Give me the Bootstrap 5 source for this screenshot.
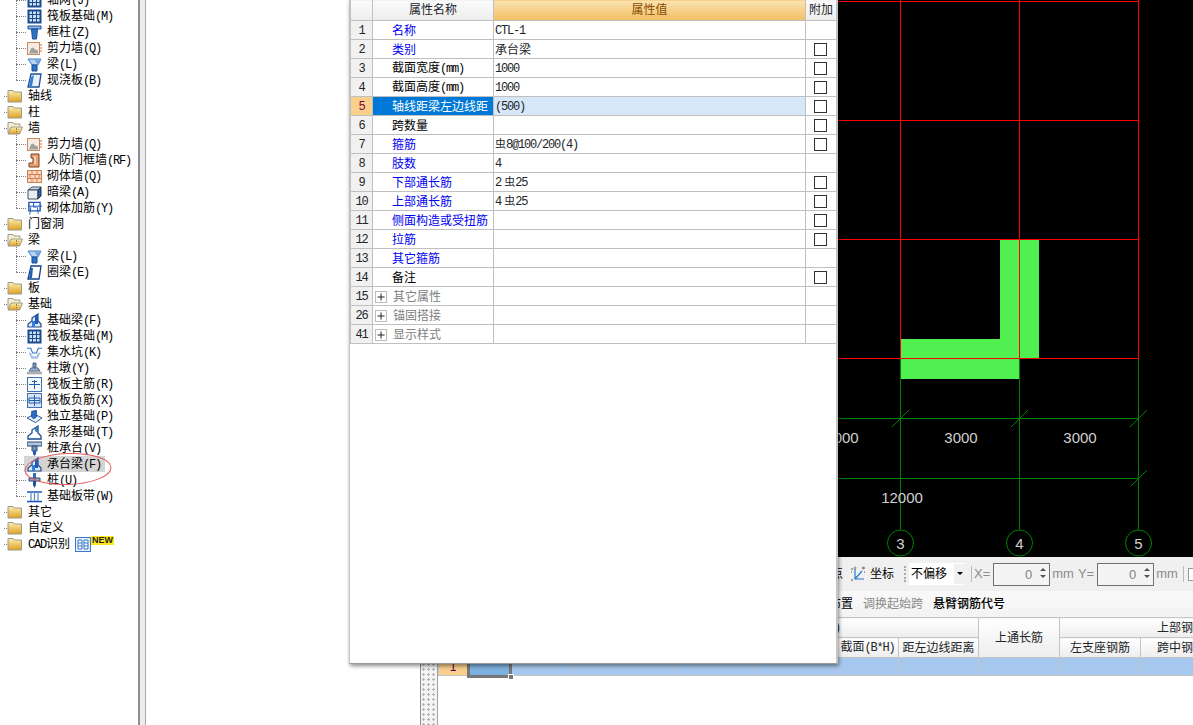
<!DOCTYPE html>
<html lang="zh">

<head>
    <meta charset="UTF-8">
    <meta name="viewport" content="width=device-width, initial-scale=1.0">
    <title>构件属性定义</title>
    <link href="https://cdn.jsdelivr.net/npm/bootstrap@5.3.2/dist/css/bootstrap.min.css" rel="stylesheet">
    <style>
        html, body { height: 100%; overflow: hidden; background: #fff; }
        body { font-family: "Liberation Sans", "Noto Sans CJK SC", sans-serif; font-size: 12px; line-height: 16px; color: #000; }
        .lat { font-family: "Liberation Mono", monospace; letter-spacing: -1.2px; }
        .app-shell { height: 725px; width: 1193px; position: relative; overflow: hidden; }

        /* left tree */
        .tree-pane { width: 138px; flex: none; margin-top: -8px; position: relative; }
        .tree-row { height: 16px; padding-left: 7px; position: relative; white-space: nowrap; }
        .tree-row::before { content: ""; position: absolute; left: 4px; width: 3px; top: 8px; border-top: 1px dotted #808080; }
        .tree-row.leaf { padding-left: 27px; }
        .tree-row.leaf::before { left: 16px; width: 10px; }
        .tree-row.leaf::after { content: ""; position: absolute; left: 16px; top: -8px; height: 16px; border-left: 1px dotted #808080; }
        .tree-row.picked::after { z-index: 1; }
        .tree-pick { position: absolute; left: 24px; top: 0; width: 81px; height: 16px; background: #d4d4d4; }
        .tree-row svg, .tree-row .tree-text { position: relative; }
        .ico-leaf { width: 15px; height: 15px; margin-right: 5px; flex: none; }
        .ico-folder { width: 16px; height: 14px; margin-right: 5px; flex: none; }
        .ico-cad { width: 16px; height: 15px; margin-left: 5px; flex: none; }
        .tag-new { align-self: flex-start; margin-left: 0; background: #ffe81a; font: bold 9px/9px "Liberation Sans", sans-serif; padding: 0 1px; color: #222; }
        .pick-ring { position: absolute; left: 20px; top: 456px; width: 96px; height: 42px; overflow: visible; }
        .pane-split { width: 8px; flex: none; background: #ececec; border-left: 2px solid #8e8e96; border-right: 1px solid #a8a8b0; }
        .blank-pane { width: 274px; flex: none; }

        /* main area */
        .main-pane { width: 773px; flex: none; }
        .cad-view { display: block; width: 773px; height: 557px; background: #000; flex: none; }
        .cad-label { font-family: "Liberation Sans", sans-serif; font-size: 15px; fill: #d0d0d0; text-anchor: middle; }
        .tool-one { height: 34px; background: #f0f0f0; flex: none; white-space: nowrap; }
        .tool-two { height: 26px; background: linear-gradient(#f9f9f9, #f3f3f3); flex: none; white-space: nowrap; }
        .tool-lead { width: 423px; text-align: right; flex: none; }
        .tool-two .tool-lead { width: 433px; }
        .axis-ico { width: 16px; height: 16px; margin-left: 7px; flex: none; }
        .grip-dots { width: 2px; height: 16px; margin-left: 10px; border-left: 2px dotted #aaa; flex: none; }
        .offset-pick { width: 57px; height: 22px; margin-left: 3px; background: #fff; padding-left: 2px; flex: none; position: relative; }
        .offset-pick b { position: absolute; right: 0; top: 1px; width: 12px; height: 20px; background: #f0f0f0; }
        .offset-pick b::after { content: ""; position: absolute; left: 3px; top: 8px; border: 3px solid transparent; border-top: 3px solid #000; }
        .tool-sep { width: 1px; height: 16px; background: #bbb; margin: 0 2px 0 5px; flex: none; }
        .tool-dim { color: #8c8c8c; font-size: 13px; flex: none; }
        .spin-box { width: 57px; height: 23px; border: 1px solid #707070; background: #f4f4f4; margin: 0 2px 0 3px; flex: none; }
        .spin-box input { width: 43px; height: 21px; border: 0; padding: 0 5px 0 0; background: transparent; text-align: right; color: #808080; font-size: 13px; border-radius: 0; }
        .spin-arrows { width: 12px; }
        .spin-arrows i { display: block; width: 0; margin: 4px auto; border: 3px solid transparent; }
        .spin-arrows i:first-child { border-bottom-color: #555; border-top: 0; }
        .spin-arrows i:last-child { border-top-color: #555; border-bottom: 0; }
        .tool-check { width: 13px; height: 13px; border: 1px solid #999; background: #fff; margin-left: 2px; flex: none; }
        .tool-faded { color: #8a8a8a; margin-left: 10px; }
        .tool-strong { margin-left: 10px; font-weight: 500; }

        /* bottom grid */
        .grid-strip { width: 18px; flex: none; height: 108px; border-left: 1px solid #8e8e96; border-right: 1px solid #a0a0a8; background: #f3f3f3 radial-gradient(#b4b4b4 1px, transparent 1.2px) 0 0 / 5px 5px; margin-right: 0; }
        .table.span-grid { table-layout: fixed; width: 864px; margin: 0; border-collapse: collapse; flex: none; align-self: flex-start; }
        .table.span-grid th, .table.span-grid td { padding: 0; border: 1px solid #c4c4c4; font-weight: 400; text-align: center; vertical-align: middle; line-height: 16px; white-space: nowrap; }
        .table.span-grid th { height: 20px; background: linear-gradient(#fff, #ededed); }
        .table.span-grid td { height: 18px; background: #a6c8ee; }
        .table.span-grid td.grid-num { background: #f8cf8c; color: #60004a; }
        .table.span-grid td.grid-sel { background: #7eb0e0; position: relative; }
        .table.span-grid th.head-tail { text-align: right; padding-right: 138px; }
        .sel-box { position: absolute; left: -1px; right: -2px; top: -1px; bottom: -3px; border: 3px solid #777; }
        .sel-handle { position: absolute; right: -5px; bottom: -5px; width: 6px; height: 6px; background: #777; border: 1px solid #fff; }

        /* property dialog */
        .prop-window { position: absolute; left: 349px; top: 0; width: 489px; height: 664px; background: #fff; border-right: 2px solid #c4c4c4; border-bottom: 1px solid #999; border-left: 1px solid #c4c4c4; box-shadow: 1px 2px 4px rgba(0, 0, 0, .45); }
        .table.prop-table { table-layout: fixed; width: 486px; margin: -1px 0 0 0; border-collapse: collapse; }
        .table.prop-table th, .table.prop-table td { padding: 1px 0 0; height: 19px; border: 1px solid #c0c0c0; line-height: 16px; font-weight: 400; white-space: nowrap; overflow: hidden; vertical-align: middle; }
        .table.prop-table thead th { height: 21px; padding: 0; text-align: center; background: linear-gradient(#fbfbfb, #ededed); }
        .table.prop-table thead th.head-value { background: linear-gradient(#fbe3b2, #f2bf62); color: #8a4b00; }
        .table.prop-table td.row-num { text-align: center; background: #f1f1f1; }
        .table.prop-table td.row-name { padding: 2px 0 0 19px; line-height: 15px; color: #000; }
        .table.prop-table td.row-value { padding-left: 1px; }
        .table.prop-table td.row-extra { padding-top: 0; }
        .table.prop-table td.row-name.is-link { color: #0000f0; }
        .table.prop-table td.row-name.is-group { color: #808080; padding-left: 1px; }
        .table.prop-table tr.is-active td.row-num { background: #fbd08c; color: #800040; }
        .table.prop-table tr.is-active td.row-name { background: #0078d7; color: #fff; }
        .table.prop-table tr.is-active td.row-value { background: #d6e8f8; }
        .prop-check { display: block; width: 13px; height: 13px; margin: 0 0 0 8px; appearance: none; border: 1px solid #333; background: #fff; }
        .plus-box { width: 12px; height: 12px; margin: 0 6px 0 1px; vertical-align: -2px; }
        .bar-sign { font-size: 11px; }
    </style>
</head>

<body>
    <svg width="0" height="0" class="position-absolute">
        <defs>
            <linearGradient id="gold" x1="0" y1="0" x2="0" y2="1"><stop offset="0" stop-color="#fdf0b0" /><stop offset="1" stop-color="#e0a020" /></linearGradient>
            <symbol id="i-folder" viewBox="0 0 16 14"><path d="M1 3V1.500h5L7 3h7.500v10H1z" fill="url(#gold)" stroke="#9a9a8a" /></symbol>
            <symbol id="i-folder-open" viewBox="0 0 16 14"><path d="M1 12V1.500h5L7 3h6v2" fill="#f6f0d0" stroke="#9a9a8a" /><path d="M1 13L4 6h11.500l-3 7z" fill="url(#gold)" stroke="#9a9a8a" /></symbol>
            <symbol id="i-raft" viewBox="0 0 15 15"><rect x=".5" y=".5" width="14" height="14" fill="#1a4a90" /><rect x="2.500" y="2.500" width="10" height="10" fill="#c8dcf2" /><path d="M5.500 2v11M9.500 2v11M2 5.500h11M2 9.500h11" stroke="#1a4a90" /></symbol>
            <symbol id="i-post" viewBox="0 0 15 15"><path d="M1 1h13v3H1z" fill="#8cb8e8" stroke="#1f4f96" /><path d="M4.500 4h6l-1 10h-4z" fill="#2c70c8" stroke="#1f4f96" /></symbol>
            <symbol id="i-shear" viewBox="0 0 15 15"><rect x=".5" y="1.500" width="12" height="12" fill="#f4ece4" stroke="#d08858" /><path d="M2 12.500l2-5 2-1 2 2 3 1v3z" fill="#a0a0a0" /><path d="M13 4h2M13 7h2M13 10h2" stroke="#d07030" /></symbol>
            <symbol id="i-beam" viewBox="0 0 15 15"><path d="M1 2h13l-3 6H5z" fill="#b8d4f0" stroke="#3878c8" /><path d="M5 8h5v6H5z" fill="#2c70c8" stroke="#1f4f96" /><path d="M7 2l7 0-3 6z" fill="#70a8e0" /></symbol>
            <symbol id="i-slab" viewBox="0 0 15 15"><path d="M4 1h10l-2 13H1z" fill="#e8f0fa" stroke="#1f4f96" stroke-width="1.300" /><path d="M2 13l2-9 3-2-2 11z" fill="#3080d8" /></symbol>
            <symbol id="i-frame-wall" viewBox="0 0 15 15"><path d="M5 1h7v13H2v-4h4V5H4V1z" fill="#e8a070" stroke="#7a4020" /><path d="M8 3v8" stroke="#fff" /></symbol>
            <symbol id="i-brick" viewBox="0 0 15 15"><rect x=".5" y="1.500" width="14" height="12" fill="#f8d8c0" stroke="#d08050" /><path d="M1 5.500h13M1 9.500h13M5 2v3.500M10 2v3.500M3 5.500v4M8 5.500v4M12 5.500v4M5 9.500v4M10 9.500v4" stroke="#d08050" /></symbol>
            <symbol id="i-hidden" viewBox="0 0 15 15"><path d="M1 5l4-3h9l-3 3z" fill="#c8d8e8" stroke="#405060" /><path d="M1 5h10v9H1z" fill="#e8eef4" stroke="#405060" /><path d="M11 5l3-3v9l-3 3z" fill="#3060a0" stroke="#203050" /></symbol>
            <symbol id="i-tie" viewBox="0 0 16 15"><path d="M2 1h12v9H2z" fill="none" stroke="#1f58b8" stroke-width="1.500" /><path d="M1 5h15M7 1v5M4 6l-1 8M11 6l1 7M7 6h3" stroke="#1f58b8" /></symbol>
            <symbol id="i-ring" viewBox="0 0 15 15"><path d="M4 1h10l-2 13H1z" fill="#fff" stroke="#10408a" stroke-width="1.300" /><path d="M2 13l2-10 2 0-1 10z" fill="#2060b8" /></symbol>
            <symbol id="i-found" viewBox="0 0 15 15"><path d="M1 14h13v-3l-3-3V1L5 5v3l-4 3z" fill="#dce8f6" stroke="#1a4a90" stroke-width="1.200" /><path d="M11 1v10H8V3z" fill="#1f58b8" /><path d="M5 8h3v6H5z" fill="#3080d8" /></symbol>
            <symbol id="i-sump" viewBox="0 0 16 15"><path d="M0 3h4l2 5h4l2-5h4" fill="none" stroke="#3878c8" stroke-width="1.200" /><path d="M2 8h2l2 4h4l2-4h2l-3 6H5z" fill="#a8c8ec" stroke="#8cb0d8" stroke-width=".5" /></symbol>
            <symbol id="i-pad" viewBox="0 0 15 15"><path d="M6 2h3v5H6z" fill="#7090b8" stroke="#506888" /><path d="M4 7h7l2 3H2z" fill="#9cb4d0" stroke="#506888" /><path d="M0 11h15v2H0z" fill="#bcbcbc" stroke="#888" stroke-width=".5" /></symbol>
            <symbol id="i-main-bar" viewBox="0 0 15 15"><rect x=".5" y=".5" width="14" height="14" fill="#f4f8fc" stroke="#4070b0" /><path d="M2 7.500h11M7.500 3v9M5 4.500h5" stroke="#2060b0" /></symbol>
            <symbol id="i-neg-bar" viewBox="0 0 15 15"><rect x=".5" y=".5" width="14" height="14" fill="#d8e4f2" stroke="#4070b0" /><path d="M2 5h11v5H2zM7.500 2v11M2 7.500h11" fill="none" stroke="#2060b0" /></symbol>
            <symbol id="i-isolated" viewBox="0 0 16 15"><path d="M0 9l8-4 8 4-7 5z" fill="#e8f0f8" stroke="#1f4f96" /><path d="M5 2l5-1v7l-3 2-2-2z" fill="#2c70c8" stroke="#1f4f96" /></symbol>
            <symbol id="i-strip" viewBox="0 0 15 15"><path d="M1 14h13v-3l-3-3V1L5 5v3l-4 3z" fill="#fff" stroke="#1a4a90" stroke-width="1.300" /><path d="M11 1v7L8 6V3z" fill="#3878c8" /></symbol>
            <symbol id="i-cap" viewBox="0 0 15 15"><path d="M0 1h15v4H0z" fill="#b0c4dc" stroke="#2c4c78" /><path d="M5 5h5v5H5z" fill="#7090b8" stroke="#2c4c78" /><path d="M6 10h3v3l-1.500 2L6 13z" fill="#1f58b8" /></symbol>
            <symbol id="i-pile" viewBox="0 0 15 15"><path d="M6 0h3v5H6z" fill="#3070c0" /><path d="M2 5h11v3H2z" fill="#90a8c8" stroke="#2c4c78" /><path d="M6 8h3v4l-1.500 3L6 12z" fill="#1f4f96" /></symbol>
            <symbol id="i-band" viewBox="0 0 15 15"><path d="M0 3h15M0 12.500h15" stroke="#1f58b8" stroke-width="1.500" /><path d="M4 3v9M7.500 3v9M11 3v9" stroke="#6090c8" stroke-width="1.300" /><path d="M0 13h15v1H0z" fill="#a8c8ec" /></symbol>
        </defs>
    </svg>

    <div class="app-shell d-flex">
        <div class="tree-pane">
            <div class="tree-row leaf d-flex align-items-center"><svg class="ico-leaf"><use href="#i-raft" /></svg><span class="tree-text">轴网<span class="lat">(J)</span></span></div>
            <div class="tree-row leaf d-flex align-items-center"><svg class="ico-leaf"><use href="#i-raft" /></svg><span class="tree-text">筏板基础<span class="lat">(M)</span></span></div>
            <div class="tree-row leaf d-flex align-items-center"><svg class="ico-leaf"><use href="#i-post" /></svg><span class="tree-text">框柱<span class="lat">(Z)</span></span></div>
            <div class="tree-row leaf d-flex align-items-center"><svg class="ico-leaf"><use href="#i-shear" /></svg><span class="tree-text">剪力墙<span class="lat">(Q)</span></span></div>
            <div class="tree-row leaf d-flex align-items-center"><svg class="ico-leaf"><use href="#i-beam" /></svg><span class="tree-text">梁<span class="lat">(L)</span></span></div>
            <div class="tree-row leaf d-flex align-items-center"><svg class="ico-leaf"><use href="#i-slab" /></svg><span class="tree-text">现浇板<span class="lat">(B)</span></span></div>
            <div class="tree-row d-flex align-items-center"><svg class="ico-folder"><use href="#i-folder" /></svg>轴线</div>
            <div class="tree-row d-flex align-items-center"><svg class="ico-folder"><use href="#i-folder" /></svg>柱</div>
            <div class="tree-row d-flex align-items-center"><svg class="ico-folder"><use href="#i-folder-open" /></svg>墙</div>
            <div class="tree-row leaf d-flex align-items-center"><svg class="ico-leaf"><use href="#i-shear" /></svg><span class="tree-text">剪力墙<span class="lat">(Q)</span></span></div>
            <div class="tree-row leaf d-flex align-items-center"><svg class="ico-leaf"><use href="#i-frame-wall" /></svg><span class="tree-text">人防门框墙<span class="lat">(RF)</span></span></div>
            <div class="tree-row leaf d-flex align-items-center"><svg class="ico-leaf"><use href="#i-brick" /></svg><span class="tree-text">砌体墙<span class="lat">(Q)</span></span></div>
            <div class="tree-row leaf d-flex align-items-center"><svg class="ico-leaf"><use href="#i-hidden" /></svg><span class="tree-text">暗梁<span class="lat">(A)</span></span></div>
            <div class="tree-row leaf d-flex align-items-center"><svg class="ico-leaf"><use href="#i-tie" /></svg><span class="tree-text">砌体加筋<span class="lat">(Y)</span></span></div>
            <div class="tree-row d-flex align-items-center"><svg class="ico-folder"><use href="#i-folder" /></svg>门窗洞</div>
            <div class="tree-row d-flex align-items-center"><svg class="ico-folder"><use href="#i-folder-open" /></svg>梁</div>
            <div class="tree-row leaf d-flex align-items-center"><svg class="ico-leaf"><use href="#i-beam" /></svg><span class="tree-text">梁<span class="lat">(L)</span></span></div>
            <div class="tree-row leaf d-flex align-items-center"><svg class="ico-leaf"><use href="#i-ring" /></svg><span class="tree-text">圈梁<span class="lat">(E)</span></span></div>
            <div class="tree-row d-flex align-items-center"><svg class="ico-folder"><use href="#i-folder" /></svg>板</div>
            <div class="tree-row d-flex align-items-center"><svg class="ico-folder"><use href="#i-folder-open" /></svg>基础</div>
            <div class="tree-row leaf d-flex align-items-center"><svg class="ico-leaf"><use href="#i-found" /></svg><span class="tree-text">基础梁<span class="lat">(F)</span></span></div>
            <div class="tree-row leaf d-flex align-items-center"><svg class="ico-leaf"><use href="#i-raft" /></svg><span class="tree-text">筏板基础<span class="lat">(M)</span></span></div>
            <div class="tree-row leaf d-flex align-items-center"><svg class="ico-leaf"><use href="#i-sump" /></svg><span class="tree-text">集水坑<span class="lat">(K)</span></span></div>
            <div class="tree-row leaf d-flex align-items-center"><svg class="ico-leaf"><use href="#i-pad" /></svg><span class="tree-text">柱墩<span class="lat">(Y)</span></span></div>
            <div class="tree-row leaf d-flex align-items-center"><svg class="ico-leaf"><use href="#i-main-bar" /></svg><span class="tree-text">筏板主筋<span class="lat">(R)</span></span></div>
            <div class="tree-row leaf d-flex align-items-center"><svg class="ico-leaf"><use href="#i-neg-bar" /></svg><span class="tree-text">筏板负筋<span class="lat">(X)</span></span></div>
            <div class="tree-row leaf d-flex align-items-center"><svg class="ico-leaf"><use href="#i-isolated" /></svg><span class="tree-text">独立基础<span class="lat">(P)</span></span></div>
            <div class="tree-row leaf d-flex align-items-center"><svg class="ico-leaf"><use href="#i-strip" /></svg><span class="tree-text">条形基础<span class="lat">(T)</span></span></div>
            <div class="tree-row leaf d-flex align-items-center"><svg class="ico-leaf"><use href="#i-cap" /></svg><span class="tree-text">桩承台<span class="lat">(V)</span></span></div>
            <div class="tree-row leaf picked d-flex align-items-center"><div class="tree-pick"></div><svg class="ico-leaf"><use href="#i-found" /></svg><span class="tree-text">承台梁<span class="lat">(F)</span></span></div>
            <div class="tree-row leaf d-flex align-items-center"><svg class="ico-leaf"><use href="#i-pile" /></svg><span class="tree-text">桩<span class="lat">(U)</span></span></div>
            <div class="tree-row leaf d-flex align-items-center"><svg class="ico-leaf"><use href="#i-band" /></svg><span class="tree-text">基础板带<span class="lat">(W)</span></span></div>
            <div class="tree-row d-flex align-items-center"><svg class="ico-folder"><use href="#i-folder" /></svg>其它</div>
            <div class="tree-row d-flex align-items-center"><svg class="ico-folder"><use href="#i-folder" /></svg>自定义</div>
            <div class="tree-row d-flex align-items-center"><svg class="ico-folder"><use href="#i-folder" /></svg><span class="tree-text"><span class="lat">CAD</span>识别</span>
                <svg class="ico-cad" viewBox="0 0 16 15"><rect x=".5" y=".5" width="15" height="14" fill="#e8f0fa" stroke="#3878c8" /><path d="M3 3h4v9H3zM9 3h4v9H9z" fill="#fff" stroke="#3878c8" /><path d="M3 6h4M3 9h4M9 6h4M9 9h4" stroke="#3878c8" /></svg>
                <span class="tag-new">NEW</span>
            </div>
            <svg class="pick-ring" viewBox="20 448 96 42"><ellipse cx="68" cy="469" rx="43" ry="15.500" fill="none" stroke="#e05a5a" transform="rotate(-2 68 469)" /></svg>
        </div>
        <div class="pane-split"></div>
        <div class="blank-pane"></div>

        <div class="main-pane d-flex flex-column">
            <svg class="cad-view" viewBox="420 0 773 557" shape-rendering="crispEdges">
                <path d="M901 339h99V240h39v118h-20v21H901z" fill="#50f050" />
                <g stroke="#008000" fill="none">
                    <path d="M900.500 358V530M1019.500 358V530M1138.500 358V530M420 418.500H1138.500M420 478.500H1138.500" />
                    <g shape-rendering="auto">
                        <path d="M892 427L909 410M1011 427L1028 410M1130 427L1147 410M1131 486L1147 470" />
                        <circle cx="900.500" cy="543" r="13" />
                        <circle cx="1019.500" cy="543" r="13" />
                        <circle cx="1138.500" cy="543" r="13" />
                    </g>
                </g>
                <path d="M420 1.500H1138.500M420 120.500H1138.500M420 239.500H1138.500M420 358.500H1138.500M900.500 0V358M1019.500 0V358M1138.500 0V358" stroke="#f00" fill="none" />
                <g shape-rendering="auto">
                    <text class="cad-label" x="842" y="443">3000</text>
                    <text class="cad-label" x="961" y="443">3000</text>
                    <text class="cad-label" x="1080" y="443">3000</text>
                    <text class="cad-label" x="902" y="503">12000</text>
                    <text class="cad-label" x="900.500" y="549">3</text>
                    <text class="cad-label" x="1019.500" y="549">4</text>
                    <text class="cad-label" x="1138.500" y="549">5</text>
                </g>
            </svg>

            <div class="tool-one d-flex align-items-center">
                <span class="tool-lead">原点</span>
                <svg class="axis-ico" viewBox="0 0 16 16"><path d="M5 3v10h9M5 13l7-8" fill="none" stroke="#2878d0" stroke-width="1.200" /><path d="M1 3h2M1 6h1M13 2h2M1 14h2M14 6h1" stroke="#555" /><circle cx="5" cy="2" r="1" fill="none" stroke="#555" stroke-width=".6" /><circle cx="13" cy="2" r="1" fill="none" stroke="#555" stroke-width=".6" /></svg>
                <span class="ms-1">坐标</span>
                <span class="grip-dots"></span>
                <div class="offset-pick d-flex align-items-center">不偏移<b></b></div>
                <span class="tool-sep"></span>
                <span class="tool-dim">X=</span>
                <div class="spin-box d-flex"><input class="form-control" type="text" value="0"><div class="spin-arrows"><i></i><i></i></div></div>
                <span class="tool-dim">mm</span>
                <span class="tool-dim ms-1">Y=</span>
                <div class="spin-box d-flex"><input class="form-control" type="text" value="0"><div class="spin-arrows"><i></i><i></i></div></div>
                <span class="tool-dim">mm</span>
                <span class="tool-sep"></span>
                <span class="tool-check"></span>
            </div>
            <div class="tool-two d-flex align-items-center">
                <span class="tool-lead">布置</span>
                <span class="tool-faded">调换起始跨</span>
                <span class="tool-strong">悬臂钢筋代号</span>
            </div>

            <div class="d-flex flex-grow-1">
                <div class="grid-strip"></div>
                <table class="table span-grid">
                    <colgroup>
                        <col style="width:29px"><col style="width:43px"><col style="width:60px"><col style="width:104px"><col style="width:81px"><col style="width:81px"><col style="width:62px"><col style="width:80px"><col style="width:81px"><col style="width:81px"><col style="width:81px"><col style="width:81px">
                    </colgroup>
                    <thead>
                        <tr>
                            <th rowspan="2"></th>
                            <th rowspan="2">跨号</th>
                            <th rowspan="2">标高</th>
                            <th colspan="5" class="head-tail">构件尺寸<span class="lat">(mm)</span></th>
                            <th rowspan="2">上通长筋</th>
                            <th colspan="3">上部钢筋</th>
                        </tr>
                        <tr>
                            <th>起点</th>
                            <th>终点</th>
                            <th>跨长</th>
                            <th>截面<span class="lat">(B*H)</span></th>
                            <th>距左边线距离</th>
                            <th>左支座钢筋</th>
                            <th>跨中钢筋</th>
                            <th>右支座钢筋</th>
                        </tr>
                    </thead>
                    <tbody>
                        <tr>
                            <td class="grid-num">1</td>
                            <td class="grid-sel"><div class="sel-box"><div class="sel-handle"></div></div></td>
                            <td></td><td></td><td></td><td></td><td></td><td></td><td></td><td></td><td></td><td></td>
                        </tr>
                    </tbody>
                </table>
            </div>
        </div>

        <div class="prop-window">
            <table class="table prop-table">
                <colgroup>
                    <col style="width:22px"><col style="width:121px"><col style="width:312px"><col style="width:31px">
                </colgroup>
                <thead>
                    <tr><th></th><th>属性名称</th><th class="head-value">属性值</th><th>附加</th></tr>
                </thead>
                <tbody>
                    <tr><td class="row-num lat">1</td><td class="row-name is-link">名称</td><td class="row-value"><span class="lat">CTL-1</span></td><td class="row-extra"></td></tr>
                    <tr><td class="row-num lat">2</td><td class="row-name is-link">类别</td><td class="row-value">承台梁</td><td class="row-extra"><input class="prop-check" type="checkbox"></td></tr>
                    <tr><td class="row-num lat">3</td><td class="row-name">截面宽度<span class="lat">(mm)</span></td><td class="row-value"><span class="lat">1000</span></td><td class="row-extra"><input class="prop-check" type="checkbox"></td></tr>
                    <tr><td class="row-num lat">4</td><td class="row-name">截面高度<span class="lat">(mm)</span></td><td class="row-value"><span class="lat">1000</span></td><td class="row-extra"><input class="prop-check" type="checkbox"></td></tr>
                    <tr class="is-active"><td class="row-num lat">5</td><td class="row-name">轴线距梁左边线距</td><td class="row-value"><span class="lat">(500)</span></td><td class="row-extra"><input class="prop-check" type="checkbox"></td></tr>
                    <tr><td class="row-num lat">6</td><td class="row-name">跨数量</td><td class="row-value"></td><td class="row-extra"><input class="prop-check" type="checkbox"></td></tr>
                    <tr><td class="row-num lat">7</td><td class="row-name is-link">箍筋</td><td class="row-value"><span class="bar-sign">虫</span><span class="lat">8@100/200(4)</span></td><td class="row-extra"><input class="prop-check" type="checkbox"></td></tr>
                    <tr><td class="row-num lat">8</td><td class="row-name is-link">肢数</td><td class="row-value"><span class="lat">4</span></td><td class="row-extra"></td></tr>
                    <tr><td class="row-num lat">9</td><td class="row-name is-link">下部通长筋</td><td class="row-value"><span class="lat">2</span> <span class="bar-sign">虫</span><span class="lat">25</span></td><td class="row-extra"><input class="prop-check" type="checkbox"></td></tr>
                    <tr><td class="row-num lat">10</td><td class="row-name is-link">上部通长筋</td><td class="row-value"><span class="lat">4</span> <span class="bar-sign">虫</span><span class="lat">25</span></td><td class="row-extra"><input class="prop-check" type="checkbox"></td></tr>
                    <tr><td class="row-num lat">11</td><td class="row-name is-link">侧面构造或受扭筋</td><td class="row-value"></td><td class="row-extra"><input class="prop-check" type="checkbox"></td></tr>
                    <tr><td class="row-num lat">12</td><td class="row-name is-link">拉筋</td><td class="row-value"></td><td class="row-extra"><input class="prop-check" type="checkbox"></td></tr>
                    <tr><td class="row-num lat">13</td><td class="row-name is-link">其它箍筋</td><td class="row-value"></td><td class="row-extra"></td></tr>
                    <tr><td class="row-num lat">14</td><td class="row-name">备注</td><td class="row-value"></td><td class="row-extra"><input class="prop-check" type="checkbox"></td></tr>
                    <tr><td class="row-num lat">15</td><td class="row-name is-group"><svg class="plus-box" viewBox="0 0 12 12"><rect x=".5" y=".5" width="11" height="11" fill="#fff" stroke="#bbb" /><path d="M2.500 6h7M6 2.500v7" stroke="#222" /></svg>其它属性</td><td class="row-value"></td><td class="row-extra"></td></tr>
                    <tr><td class="row-num lat">26</td><td class="row-name is-group"><svg class="plus-box" viewBox="0 0 12 12"><rect x=".5" y=".5" width="11" height="11" fill="#fff" stroke="#bbb" /><path d="M2.500 6h7M6 2.500v7" stroke="#222" /></svg>锚固搭接</td><td class="row-value"></td><td class="row-extra"></td></tr>
                    <tr><td class="row-num lat">41</td><td class="row-name is-group"><svg class="plus-box" viewBox="0 0 12 12"><rect x=".5" y=".5" width="11" height="11" fill="#fff" stroke="#bbb" /><path d="M2.500 6h7M6 2.500v7" stroke="#222" /></svg>显示样式</td><td class="row-value"></td><td class="row-extra"></td></tr>
                </tbody>
            </table>
        </div>
    </div>

    <script src="https://cdn.jsdelivr.net/npm/bootstrap@5.3.2/dist/js/bootstrap.bundle.min.js"></script>
</body>

</html>
